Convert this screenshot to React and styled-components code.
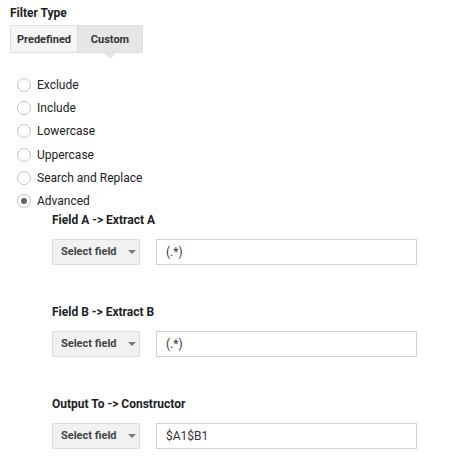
import React from 'react';
import styled, { createGlobalStyle } from 'styled-components';

const Global = createGlobalStyle`
  body {
    margin: 0;
    background: #ffffff;
    font-family: Roboto, "Liberation Sans", Arial, sans-serif;
    color: #212121;
  }
`;

const Page = styled.div`
  padding: 6px 10px 0 10px;
  width: 458px;
  box-sizing: border-box;
`;

const Title = styled.div`
  font-size: 12px;
  font-weight: bold;
  line-height: 14px;
  color: #212121;
  margin-bottom: 5px;
`;

const Tabs = styled.div`
  display: flex;
  width: 133px;
  height: 28px;
  box-sizing: border-box;
  border: 1px solid #dcdcdc;
  border-radius: 2px;
`;

const Tab = styled.div`
  position: relative;
  flex: ${(p) => (p.$active ? '1 1 auto' : '0 0 66px')};
  display: flex;
  align-items: center;
  justify-content: center;
  font-size: 11px;
  font-weight: bold;
  color: #333;
  background: ${(p) => (p.$active ? '#e6e6e6' : '#f5f5f5')};
  border-left: ${(p) => (p.$active ? '1px solid #dcdcdc' : 'none')};

  &::after {
    content: '';
    display: ${(p) => (p.$active ? 'block' : 'none')};
    position: absolute;
    left: 50%;
    bottom: -7px;
    margin-left: -6px;
    border-left: 6px solid transparent;
    border-right: 6px solid transparent;
    border-top: 6px solid #e6e6e6;
  }
`;

const RadioList = styled.div`
  margin-top: 20px;
  display: flex;
  flex-direction: column;
`;

const RadioRow = styled.label`
  display: flex;
  align-items: center;
  height: 23.3px;
  font-size: 12px;
  color: #212121;
  padding-left: 7px;
`;

const Circle = styled.span`
  width: 14px;
  height: 14px;
  box-sizing: border-box;
  border: 1px solid #c4c4c4;
  border-radius: 50%;
  margin-right: 6px;
  display: flex;
  align-items: center;
  justify-content: center;

  &::after {
    content: '';
    width: 6px;
    height: 6px;
    border-radius: 50%;
    background: #666;
    display: ${(p) => (p.$checked ? 'block' : 'none')};
  }
`;

const Fields = styled.div`
  padding-left: 42px;
  margin-top: -2px;
  display: flex;
  flex-direction: column;
  gap: 38px;
`;

const FieldBlock = styled.div`
  display: flex;
  flex-direction: column;
`;

const FieldLabel = styled.div`
  font-size: 12px;
  font-weight: bold;
  line-height: 18px;
  color: #212121;
  margin-bottom: 10px;
`;

const FieldRow = styled.div`
  display: flex;
  gap: 16px;
`;

const SelectBtn = styled.div`
  width: 88px;
  height: 26px;
  box-sizing: border-box;
  border: 1px solid #dcdcdc;
  border-radius: 2px;
  background: #f1f1f1;
  display: flex;
  align-items: center;
  padding-left: 8px;
  font-size: 11px;
  font-weight: bold;
  color: #444;
`;

const Arrow = styled.span`
  margin-left: 11px;
  border-left: 4px solid transparent;
  border-right: 4px solid transparent;
  border-top: 4px solid #777;
`;

const Input = styled.div`
  width: 261px;
  height: 26px;
  box-sizing: border-box;
  border: 1px solid #cfcfcf;
  display: flex;
  align-items: center;
  padding-left: 9px;
  font-size: 12px;
  color: #333;
`;

const options = ['Exclude', 'Include', 'Lowercase', 'Uppercase', 'Search and Replace', 'Advanced'];

const fields = [
  { label: 'Field A -> Extract A', value: '(.*)' },
  { label: 'Field B -> Extract B', value: '(.*)' },
  { label: 'Output To -> Constructor', value: '$A1$B1' },
];

export default function App() {
  return (
    <Page>
      <Global />
      <Title>Filter Type</Title>
      <Tabs>
        <Tab>Predefined</Tab>
        <Tab $active>Custom</Tab>
      </Tabs>
      <RadioList>
        {options.map((o) => (
          <RadioRow key={o}>
            <Circle $checked={o === 'Advanced'} />
            {o}
          </RadioRow>
        ))}
      </RadioList>
      <Fields>
        {fields.map((f) => (
          <FieldBlock key={f.label}>
            <FieldLabel>{f.label}</FieldLabel>
            <FieldRow>
              <SelectBtn>
                Select field
                <Arrow />
              </SelectBtn>
              <Input>{f.value}</Input>
            </FieldRow>
          </FieldBlock>
        ))}
      </Fields>
    </Page>
  );
}
